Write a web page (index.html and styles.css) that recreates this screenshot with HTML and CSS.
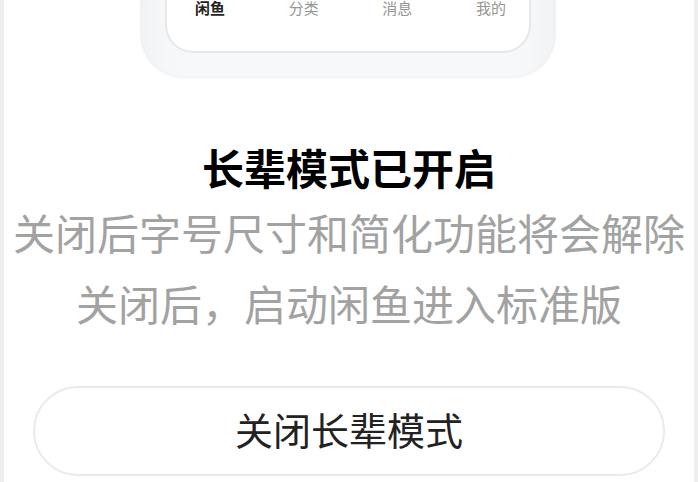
FILE: index.html
```html
<!DOCTYPE html>
<html lang="zh-CN">
<head>
<meta charset="utf-8">
<title>长辈模式</title>
<link rel="stylesheet" href="styles.css">
</head>
<body>
<div class="page">
  <div class="phone">
    <div class="screen">
      <div class="tabs">
        <span class="tab active">闲鱼</span>
        <span class="tab">分类</span>
        <span class="tab">消息</span>
        <span class="tab">我的</span>
      </div>
    </div>
  </div>
  <h1 class="title">长辈模式已开启</h1>
  <p class="desc">关闭后字号尺寸和简化功能将会解除</p>
  <p class="desc">关闭后，启动闲鱼进入标准版</p>
  <button class="close-btn">关闭长辈模式</button>
</div>
</body>
</html>
```
FILE: styles.css
```css
html, body {
  margin: 0;
  padding: 0;
  background: #eeeeee;
  height: 482px;
  overflow: hidden;
}
.page {
  margin: 0 4px;
  height: 482px;
  background: #ffffff;
  display: flex;
  flex-direction: column;
  align-items: center;
  font-family: "Noto Sans CJK SC", "Noto Sans", sans-serif;
  overflow: hidden;
}
.phone {
  box-sizing: border-box;
  width: 416px;
  height: 78px;
  margin-right: 2px;
  padding: 0 25px 25px 25px;
  background: linear-gradient(90deg, #f1f2f4 0%, #f7f8f9 8%, #f7f8f9 92%, #f1f2f4 100%);
  border-radius: 0 0 44px 44px;
  box-shadow: 0 1px 2px rgba(0,0,0,0.03), inset 0 -2px 3px rgba(0,0,0,0.02);
  flex-shrink: 0;
}
.screen {
  box-sizing: border-box;
  height: 53px;
  background: #ffffff;
  border: 2px solid #e6e7e9;
  border-top: none;
  border-radius: 0 0 28px 28px;
  overflow: hidden;
}
.tabs {
  display: flex;
  justify-content: space-between;
  padding: 0 23px 0 28px;
  margin-top: 0;
  font-size: 15px;
  line-height: 16px;
  color: #959595;
}
.tab.active {
  color: #222222;
  font-weight: 700;
}
.title {
  margin: 68px 0 8px;
  font-size: 42px;
  line-height: 42px;
  font-weight: 700;
  color: #000000;
}
.desc {
  margin: 0;
  font-size: 42px;
  line-height: 71px;
  color: #a2a2a2;
  white-space: nowrap;
}
.close-btn {
  box-sizing: border-box;
  margin-top: 48px;
  width: 632px;
  height: 90px;
  border: 2px solid #ebebeb;
  border-radius: 45px;
  background: #ffffff;
  font-family: "Noto Sans CJK SC", "Noto Sans", sans-serif;
  font-size: 38px;
  line-height: 1;
  padding: 0 0 4px;
  color: #222222;
  flex-shrink: 0;
}
```
